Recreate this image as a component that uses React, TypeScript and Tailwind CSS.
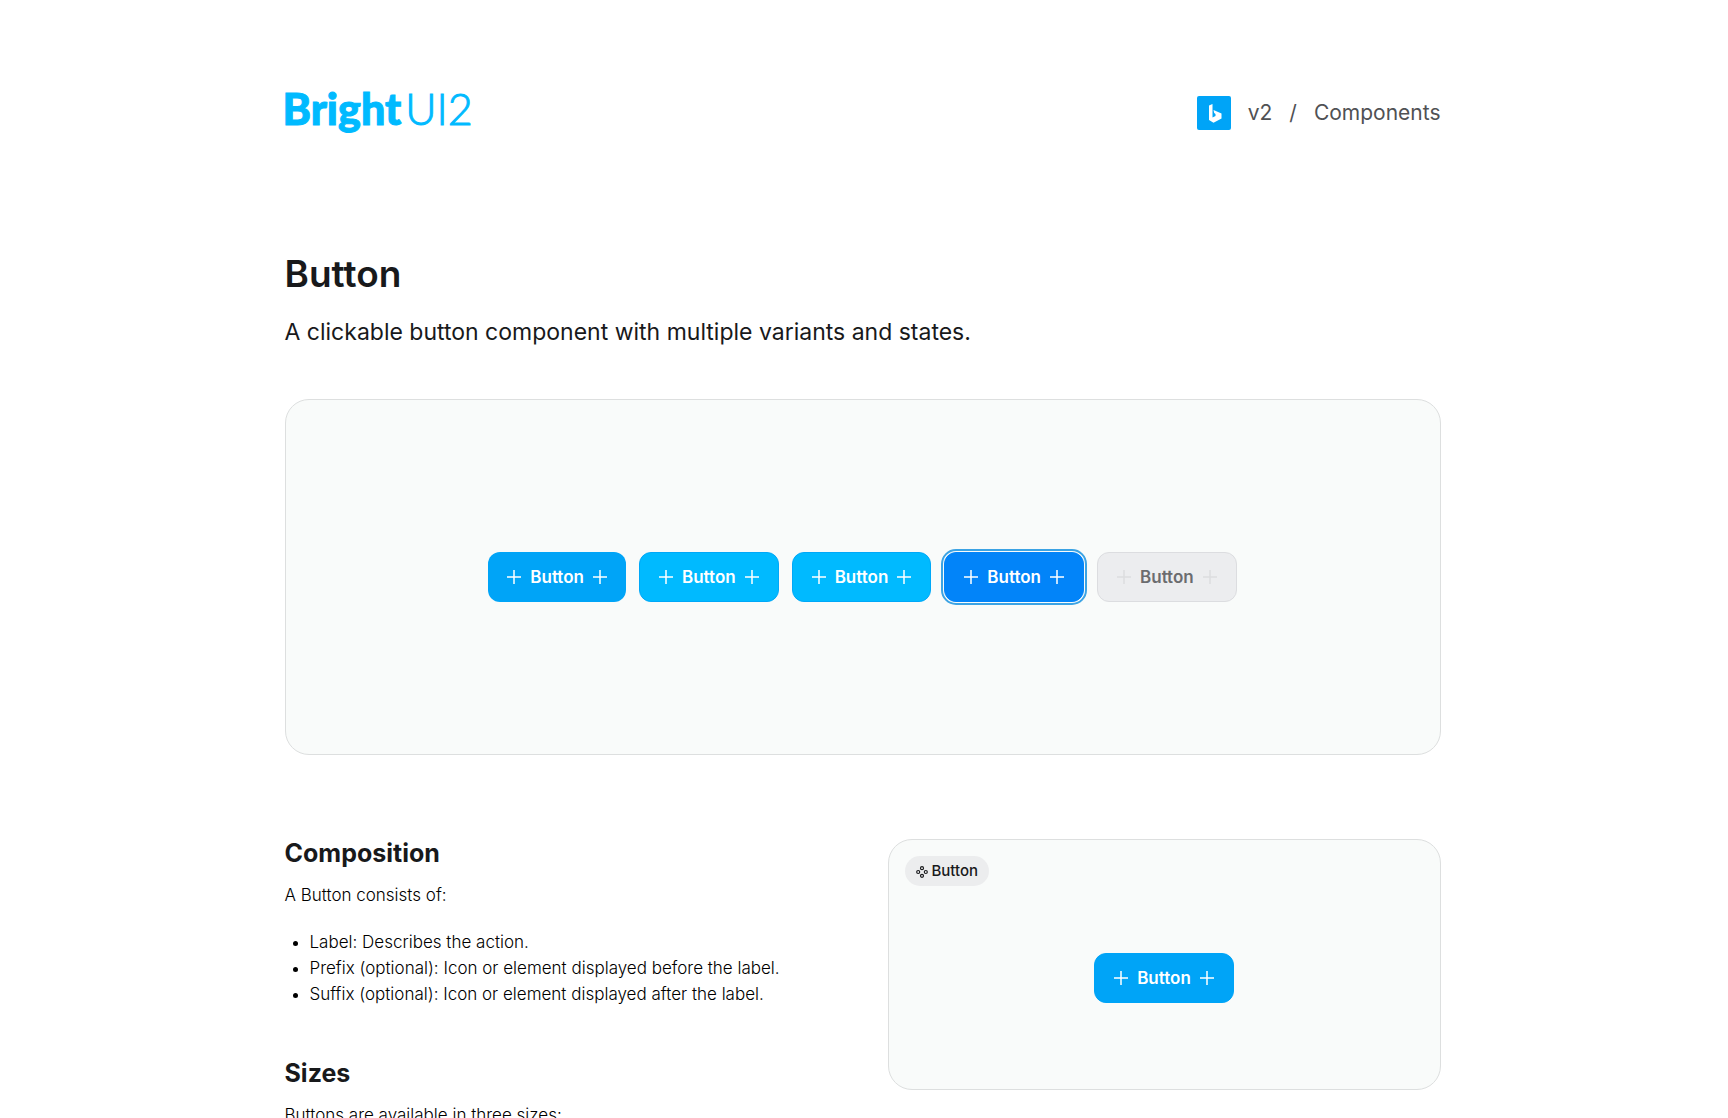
import { clsx } from 'clsx';

type Variant = 'default' | 'hover' | 'active' | 'focus' | 'disabled';

const variants: Variant[] = ['default', 'hover', 'active', 'focus', 'disabled'];

const variantClasses: Record<Variant, string> = {
  default: 'bg-[#00a4f7] text-white',
  hover: 'border border-[#00a8f8] bg-[#00baff] text-white',
  active: 'border border-[#00a8f8] bg-[#00baff] text-white',
  focus: 'border border-[#0284f9] bg-[#0284f9] text-white outline-2 outline-offset-1 outline-[#3ba3e4]',
  disabled: 'border border-[#dcdde0] bg-[#ecedef] text-[#6b6c6f]',
};

const composition = [
  'Label: Describes the action.',
  'Prefix (optional): Icon or element displayed before the label.',
  'Suffix (optional): Icon or element displayed after the label.',
];

function Plus({ className }: { className?: string }) {
  return (
    <svg viewBox="0 0 16 16" className={clsx('size-4 shrink-0', className)} fill="none" stroke="currentColor" strokeWidth="1.5" aria-hidden="true">
      <path d="M8 1v14M1 8h14" />
    </svg>
  );
}

function Button({ variant = 'default', className }: { variant?: Variant; className?: string }) {
  const disabled = variant === 'disabled';
  return (
    <button
      type="button"
      disabled={disabled}
      className={clsx('flex h-[50px] items-center gap-2 rounded-xl px-[18px] text-[17px] leading-6 font-semibold', variantClasses[variant], className)}
    >
      <Plus className={disabled ? 'text-[#dcdde0]' : ''} />
      Button
      <Plus className={disabled ? 'text-[#dcdde0]' : ''} />
    </button>
  );
}

function Header() {
  return (
    <header className="flex items-center justify-between">
      <a href="#" className="-ml-0.5 flex items-baseline gap-1 pb-2 font-[Lato,sans-serif] text-[43px] leading-9 text-[#00baff] [-webkit-text-stroke:1px]">
        <span className="font-black">Bright</span>
        <span className="font-light">UI2</span>
      </a>
      <nav className="flex items-center gap-[17px] text-[21px] text-[#505154]">
        <a href="#" aria-label="Home">
          <svg viewBox="0 0 34 34" className="size-[34px]" aria-hidden="true">
            <rect width="34" height="34" rx="2" fill="#00a4f7" />
            <path d="M12 9.5L15.5 8v13.5l3-1.5v-2l-1.3-1-.7-3 8 3.5v5l-8 4.2-4.5-2.7z" fill="#fff" />
          </svg>
        </a>
        <a href="#">v2</a>
        <span>/</span>
        <a href="#">Components</a>
      </nav>
    </header>
  );
}

function ComponentTag() {
  return (
    <span className="flex h-[30px] items-center gap-1 rounded-full bg-[#ecedee] px-[11px] text-[15px] font-medium">
      <svg viewBox="0 0 12 12" className="mt-0.5 size-3" fill="none" stroke="currentColor" strokeWidth="1.2" aria-hidden="true">
        <circle cx="6" cy="2.2" r="1.5" />
        <circle cx="6" cy="9.8" r="1.5" />
        <circle cx="2.2" cy="6" r="1.5" />
        <circle cx="9.8" cy="6" r="1.5" />
      </svg>
      Button
    </span>
  );
}

export default function App() {
  return (
    <div className="min-h-screen bg-white pr-[3px] font-[Inter,sans-serif] text-[#18191b]">
      <div className="mx-auto max-w-[1156px] pt-[91px]">
        <Header />

        <main className="pt-[113px]">
          <h1 className="text-[37px] leading-[52px] font-semibold">Button</h1>
          <p className="mt-4 text-[23px] leading-8">A clickable button component with multiple variants and states.</p>

          <section className="mt-[51px] flex h-[356px] items-center justify-center gap-[13px] rounded-3xl border border-[#dddfdf] bg-[#f9fbfa]">
            {variants.map((variant) => (
              <Button key={variant} variant={variant} />
            ))}
          </section>

          <div className="mt-[84px] grid grid-cols-2 items-start gap-[50px]">
            <div>
              <section>
                <h2 className="text-[25px] leading-7 font-bold">Composition</h2>
                <p className="mt-4 text-[17px] leading-6 font-light text-black">A Button consists of:</p>
                <ul className="mt-[22px] list-disc pl-[25px] text-[17px] leading-[26px] font-light text-black">
                  {composition.map((item) => (
                    <li key={item}>{item}</li>
                  ))}
                </ul>
              </section>
              <section className="mt-[52px]">
                <h2 className="text-[25px] leading-7 font-bold">Sizes</h2>
                <p className="mt-4 text-[17px] leading-6 font-light text-black">Buttons are available in three sizes:</p>
              </section>
            </div>

            <div className="flex h-[251px] flex-col rounded-3xl border border-[#dddfdf] bg-[#f9fbfa] px-4 pt-4 pb-5">
              <div className="flex">
                <ComponentTag />
              </div>
              <div className="flex flex-1 items-center justify-center">
                <Button className="border border-[#00a4f7]" />
              </div>
            </div>
          </div>
        </main>
      </div>
    </div>
  );
}
